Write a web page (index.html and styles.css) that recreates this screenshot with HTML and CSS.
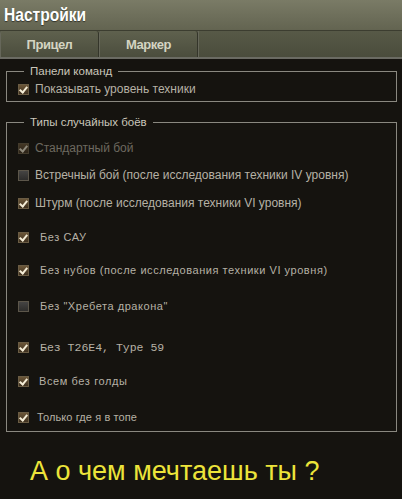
FILE: index.html
```html
<!DOCTYPE html>
<html lang="ru">
        <head>
                <meta charset="UTF-8">
                <meta name="viewport" content="width=device-width, initial-scale=1.0">
                <title>Настройки</title>
                <link rel="stylesheet" href="styles.css">
        </head>
        <body>
                <div class="header">
                        <div class="title"><span class="title-text">Настройки</span></div>
                        <div class="tabs">
                                <div class="tab">Прицел</div>
                                <div class="tab">Маркер</div>
                                <div class="tab-rest"></div>
                        </div>
                </div>

                <div class="content">
                        <fieldset class="group first">
                                <legend>Панели команд</legend>
                                <div class="row">
                                        <span class="cb on"></span>
                                        <span class="label">Показывать уровень техники</span>
                                </div>
                        </fieldset>

                        <fieldset class="group second">
                                <legend>Типы случайных боёв</legend>
                                <div class="row r1 disabled">
                                        <span class="cb on"></span>
                                        <span class="label">Стандартный бой</span>
                                </div>
                                <div class="row r2">
                                        <span class="cb"></span>
                                        <span class="label">Встречный бой (после исследования техники IV уровня)</span>
                                </div>
                                <div class="row r3">
                                        <span class="cb on"></span>
                                        <span class="label">Штурм (после исследования техники VI уровня)</span>
                                </div>
                                <div class="row r4">
                                        <span class="cb on"></span>
                                        <span class="label wide">Без САУ</span>
                                </div>
                                <div class="row r5">
                                        <span class="cb on"></span>
                                        <span class="label wide">Без нубов (после исследования техники VI уровня)</span>
                                </div>
                                <div class="row r6">
                                        <span class="cb"></span>
                                        <span class="label wide">Без "Хребета дракона"</span>
                                </div>
                                <div class="row r7">
                                        <span class="cb on"></span>
                                        <span class="label mono">Без T26E4, Type 59</span>
                                </div>
                                <div class="row r8">
                                        <span class="cb on"></span>
                                        <span class="label pixel">Всем без голды</span>
                                </div>
                                <div class="row r9">
                                        <span class="cb on"></span>
                                        <span class="label tight">Только где я в топе</span>
                                </div>
                        </fieldset>

                        <p class="dream">А о чем мечтаешь ты ?</p>
                </div>
        </body>
</html>
```

FILE: styles.css
```css
body
{
        margin: 0;
        background-color: #15130f;
        font-family: "Liberation Sans", Arial, sans-serif;
        color: #b6b1a5;
        height: 499px;
        overflow: hidden;
}
.header
{
        background: linear-gradient(180deg, #7a7b66 0%, #61624f 55%, #56584a 100%);
}
.title
{
        height: 31px;
        box-sizing: border-box;
        padding: 4px 0 0 4px;
        border-bottom: 1px solid #3c3d30;
}
.title-text
{
        display: inline-block;
        font-size: 19px;
        font-weight: bold;
        color: #ffffff;
        transform: scaleX(0.82);
        transform-origin: left center;
        text-shadow: 0 1px 1px rgba(0, 0, 0, 0.5);
}
.tabs
{
        display: flex;
        height: 26px;
        background: linear-gradient(180deg, #575947 0%, #4a4c3c 100%);
        border-bottom: 2px solid #6b6b63;
}
.tab
{
        width: 99px;
        box-sizing: border-box;
        display: flex;
        align-items: center;
        justify-content: center;
        font-size: 13px;
        font-weight: bold;
        color: #d4d4c2;
        letter-spacing: -0.5px;
        border-right: 1px solid #34352a;
        border-left: 1px solid #66675a;
        border-radius: 3px 3px 0 0;
        background: linear-gradient(180deg, #5f614e 0%, #4b4d3d 100%);
}
.tab-rest
{
        flex: 1;
        border-left: 1px solid #66675a;
}
.content
{
        padding: 5px 5px 0 6px;
}
.group
{
        margin: 0;
        padding: 0 10px 0 11px;
        border: 1px solid #8a8880;
}
.group legend
{
        margin-left: 6px;
        padding: 0 6px;
        font-size: 11.5px;
        line-height: 14px;
        color: #cbc7bb;
}
.first
{
        padding-top: 3px;
        padding-bottom: 4px;
}
.second
{
        margin-top: 13px;
        padding-top: 11px;
        padding-bottom: 6px;
}
.row
{
        display: flex;
        align-items: center;
        height: 16px;
}
.r2 { margin-top: 11px; }
.r3 { margin-top: 12px; }
.r4 { margin-top: 18px; }
.r5 { margin-top: 17px; }
.r6 { margin-top: 20px; }
.r7 { margin-top: 25px; }
.r8 { margin-top: 18px; }
.r9 { margin-top: 20px; }
.cb
{
        position: relative;
        width: 11px;
        height: 11px;
        box-sizing: border-box;
        border: 1px solid #5c564a;
        background: linear-gradient(180deg, #454443 0%, #2e2d2b 100%);
        flex: none;
}
.cb.on
{
        border-color: #6a5c44;
        background: linear-gradient(180deg, #6b5638 0%, #3e301f 100%);
}
.cb.on::after
{
        content: "";
        position: absolute;
        left: 2px;
        top: 0px;
        width: 3px;
        height: 6px;
        border-right: 2px solid #f4ecd6;
        border-bottom: 2px solid #f4ecd6;
        transform: rotate(40deg);
}
.label
{
        margin-left: 6px;
        font-size: 12px;
        white-space: nowrap;
}
.disabled .label
{
        color: #6d695f;
}
.disabled .cb
{
        opacity: 0.55;
}
.wide
{
        margin-left: 11px;
        font-size: 11px;
        letter-spacing: 0.55px;
}
.mono
{
        margin-left: 11px;
        font-family: "Liberation Mono", monospace;
        font-size: 11.5px;
}
.pixel
{
        margin-left: 10px;
        font-size: 11px;
        letter-spacing: 0.6px;
}
.tight
{
        margin-left: 8px;
        font-size: 11px;
        letter-spacing: 0.1px;
}
.dream
{
        margin: 24px 0 0 24px;
        font-size: 27px;
        color: #ece43a;
        white-space: nowrap;
}
```
